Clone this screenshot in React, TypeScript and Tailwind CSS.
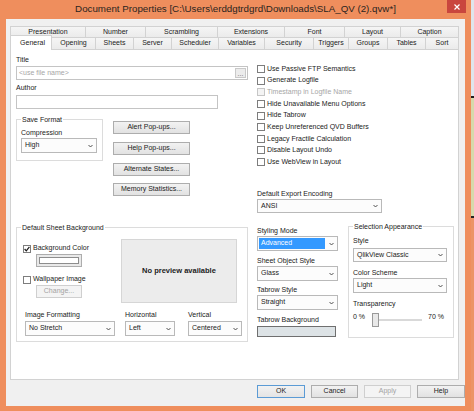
import React from 'react';

function Chevron() {
  return (
    <svg width="5" height="4" viewBox="0 0 5 4" className="shrink-0">
      <polyline points="0.5,1 2.5,3 4.5,1" fill="none" stroke="#404040" strokeWidth="0.9" />
    </svg>
  );
}

function Label({ children, className = '' }: { children: React.ReactNode; className?: string }) {
  return <div className={`h-[9px] leading-[9px] whitespace-nowrap ${className}`}>{children}</div>;
}

function Select({ value, className = '', selected = false }: { value: string; className?: string; selected?: boolean }) {
  return (
    <div className={`flex items-center border border-[#b9b9b9] bg-[#fcfcfc] ${className}`}>
      <span
        className={`flex-1 self-stretch flex items-center ${selected ? 'm-[1px] pl-[2px] bg-[#3399ff] text-white' : 'pl-[3px]'}`}
      >
        {value}
      </span>
      <span className="w-[11px] flex justify-center pr-[1px]">
        <Chevron />
      </span>
    </div>
  );
}

function Check({ label, checked = false, disabled = false, className = '' }: { label: string; checked?: boolean; disabled?: boolean; className?: string }) {
  return (
    <div className={`flex items-center whitespace-nowrap ${className}`}>
      <span
        className={`w-[8px] h-[8px] shrink-0 border flex items-center justify-center ${
          disabled ? 'border-[#c6c6c6] bg-[#f4f4f4]' : 'border-[#7d7d7d] bg-white'
        }`}
      >
        {checked && (
          <svg width="6" height="6" viewBox="0 0 6 6">
            <polyline points="0.6,3 2.3,4.8 5.4,0.8" fill="none" stroke="#1a1a1a" strokeWidth="1.2" />
          </svg>
        )}
      </span>
      <span className={`ml-[2px] ${disabled ? 'text-[#a6a6a6]' : ''}`}>{label}</span>
    </div>
  );
}

function Btn({ children, className = '', disabled = false, isDefault = false }: { children: React.ReactNode; className?: string; disabled?: boolean; isDefault?: boolean }) {
  return (
    <div
      className={`flex items-center justify-center border whitespace-nowrap ${
        disabled
          ? 'border-[#cfcfcf] bg-[#f4f4f4] text-[#a3a3a3]'
          : isDefault
          ? 'border-[#5b9bd5] bg-linear-to-b from-[#f2f2f2] to-[#e4e4e4]'
          : 'border-[#adadad] bg-linear-to-b from-[#f2f2f2] to-[#e2e2e2]'
      } ${className}`}
    >
      {children}
    </div>
  );
}

function Group({ title, className = '', children }: { title: string; className?: string; children?: React.ReactNode }) {
  return (
    <div className={`border border-[#dcdcdc] ${className}`}>
      <div className="-mt-[5px] ml-[4px] px-[1px] w-fit h-[9px] leading-[9px] bg-white whitespace-nowrap">{title}</div>
      {children}
    </div>
  );
}

const backTabs: [string, string][] = [
  ['Presentation', 'w-[75px]'],
  ['Number', 'w-[60px]'],
  ['Scrambling', 'w-[72px]'],
  ['Extensions', 'w-[67px]'],
  ['Font', 'w-[60px]'],
  ['Layout', 'w-[56px]'],
  ['Caption', 'w-[59px]'],
];

const frontTabs: [string, string][] = [
  ['Opening', 'w-[43px]'],
  ['Sheets', 'w-[38px]'],
  ['Server', 'w-[38px]'],
  ['Scheduler', 'w-[47px]'],
  ['Variables', 'w-[46px]'],
  ['Security', 'w-[49px]'],
  ['Triggers', 'w-[35px]'],
  ['Groups', 'w-[39px]'],
  ['Tables', 'w-[38px]'],
  ['Sort', 'w-[34px]'],
];

const options = [
  'Use Passive FTP Semantics',
  'Generate Logfile',
  'Timestamp in Logfile Name',
  'Hide Unavailable Menu Options',
  'Hide Tabrow',
  'Keep Unreferenced QVD Buffers',
  'Legacy Fractile Calculation',
  'Disable Layout Undo',
  'Use WebView in Layout',
];

export default function App() {
  return (
    <div className="w-[474px] h-[411px] flex overflow-hidden bg-[#ef8e5d] text-[7px] text-[#222] font-['Liberation_Sans',Arial,sans-serif]">
      {/* Dialog window */}
      <div className="w-[471px] flex flex-col">
        <div className="relative h-[19px] flex items-center justify-center pb-[1px]">
          <span className="text-[9.75px] text-[#2a2420] whitespace-nowrap">
            Document Properties [C:\Users\erddgtrdgrd\Downloads\SLA_QV (2).qvw*]
          </span>
          <div className="absolute right-[5px] top-0 w-[19px] h-[13px] bg-[#c9463e] flex items-center justify-center">
            <svg width="6" height="6" viewBox="0 0 6 6">
              <path d="M0.5 0.5 L5.5 5.5 M5.5 0.5 L0.5 5.5" stroke="#fff" strokeWidth="1.2" />
            </svg>
          </div>
        </div>

        <div className="flex-1 flex px-[6px] pb-[5px]">
          <div className="flex-1 bg-[#f0f0f0] flex flex-col pt-[7px] pl-[4px]">
            {/* tab rows */}
            <div className="flex h-[11px] w-[449px]">
              {backTabs.map(([t, w], i) => (
                <div
                  key={t}
                  className={`${w} flex items-center justify-center border-t border-l border-[#d2d2d2] bg-linear-to-b from-[#f5f5f5] to-[#ebebeb] ${
                    i === backTabs.length - 1 ? 'border-r' : ''
                  }`}
                >
                  {t}
                </div>
              ))}
            </div>
            <div className="flex items-end h-[12px] w-[449px]">
              <div className="relative z-10 w-[42px] h-[15px] -mb-[1px] flex items-center justify-center pl-[3px] bg-white border-t border-l border-r border-[#d2d2d2]">
                General
              </div>
              {frontTabs.map(([t, w], i) => (
                <div
                  key={t}
                  className={`${w} h-[12px] flex items-center justify-center border-t border-[#d2d2d2] bg-linear-to-b from-[#f5f5f5] to-[#ebebeb] ${
                    i === 0 ? '' : 'border-l'
                  } ${i === frontTabs.length - 1 ? 'border-r' : ''}`}
                >
                  {t}
                </div>
              ))}
            </div>

            {/* panel */}
            <div className="w-[449px] h-[331px] bg-white border border-[#d2d2d2] pt-[5px] pl-[5px] flex flex-col">
              <div className="flex">
                {/* left column */}
                <div className="w-[232px] flex flex-col">
                  <Label>Title</Label>
                  <div className="mt-[2px] h-[14px] border border-[#c4c4c4] flex items-center">
                    <span className="flex-1 pl-[2px] text-[#a6a6a6]">&lt;use file name&gt;</span>
                    <span className="w-[11px] h-[10px] mr-[1px] border border-[#c9c9c9] bg-[#ececec] flex items-end justify-center leading-[7px] text-[#666]">
                      ...
                    </span>
                  </div>
                  <Label className="mt-[3px]">Author</Label>
                  <div className="mt-[3px] w-[202px] h-[14px] border border-[#c4c4c4]" />
                  <div className="flex items-start mt-[10px]">
                    <Group title="Save Format" className="w-[87px] h-[42px] flex flex-col">
                      <Label className="mt-[4px] ml-[4px]">Compression</Label>
                      <Select value="High" className="mt-[1px] ml-[4px] w-[76px] h-[15px]" />
                    </Group>
                    <div className="ml-[10px] w-[77px] flex flex-col">
                      <Btn className="mt-[2px] h-[13px]">Alert Pop-ups...</Btn>
                      <Btn className="mt-[8px] h-[13px]">Help Pop-ups...</Btn>
                      <Btn className="mt-[8px] h-[13px]">Alternate States...</Btn>
                      <Btn className="mt-[7px] h-[13px]">Memory Statistics...</Btn>
                    </div>
                  </div>
                </div>

                {/* right column */}
                <div className="ml-[9px] flex flex-col pt-[8.2px]">
                  {options.map((o) => (
                    <Check key={o} label={o} disabled={o === 'Timestamp in Logfile Name'} className="h-[11.625px]" />
                  ))}
                  <Label className="mt-[20.7px]">Default Export Encoding</Label>
                  <Select value="ANSI" className="mt-[1.5px] w-[125px] h-[14px]" />
                </div>
              </div>

              <div className="flex items-start">
                <Group title="Default Sheet Background" className="mt-[14px] w-[232px] h-[115px] flex flex-col">
                  <div className="mt-[7px] flex">
                    <div className="ml-[6px] pt-[5px] flex flex-col">
                      <Check label="Background Color" checked className="h-[9px]" />
                      <div className="ml-[13px] mt-[1px] w-[46px] h-[13px] border border-[#adadad] bg-[#e9e9e9] p-[2px]">
                        <div className="w-full h-full bg-white border border-[#8d8d8d]" />
                      </div>
                      <Check label="Wallpaper Image" className="mt-[8px] h-[9px]" />
                      <Btn disabled className="ml-[13px] mt-[1px] w-[46px] h-[13px]">
                        Change...
                      </Btn>
                    </div>
                    <div className="ml-auto mr-[10px] w-[116px] h-[64px] bg-[#ececec] border border-[#d6d6d6] flex items-center justify-center font-bold text-[7.5px]">
                      No preview available
                    </div>
                  </div>
                  <div className="mt-[7px] flex">
                    <div className="ml-[8px] w-[90px] flex flex-col">
                      <Label>Image Formatting</Label>
                      <Select value="No Stretch" className="mt-[2px] h-[15px]" />
                    </div>
                    <div className="ml-[10px] w-[50px] flex flex-col">
                      <Label>Horizontal</Label>
                      <Select value="Left" className="mt-[2px] h-[15px]" />
                    </div>
                    <div className="ml-[13px] w-[54px] flex flex-col">
                      <Label>Vertical</Label>
                      <Select value="Centered" className="mt-[2px] h-[15px]" />
                    </div>
                  </div>
                </Group>

                <div className="ml-[9px] w-[81px] flex flex-col">
                  <Label className="mt-[12.5px]">Styling Mode</Label>
                  <Select value="Advanced" selected className="mt-[1.5px] h-[15px]" />
                  <Label className="mt-[4.5px]">Sheet Object Style</Label>
                  <Select value="Glass" className="mt-[1.5px] h-[15px]" />
                  <Label className="mt-[3.5px]">Tabrow Style</Label>
                  <Select value="Straight" className="mt-[1.5px] h-[15px]" />
                  <Label className="mt-[4.5px]">Tabrow Background</Label>
                  <div className="mt-[2.5px] w-[79px] h-[11px] border border-[#6f6f6f] bg-[#dde3e6]" />
                </div>

                <Group title="Selection Appearance" className="ml-[10px] mt-[13px] w-[106px] h-[112px] flex flex-col">
                  <div className="pl-[4px] flex flex-col">
                    <Label className="mt-[4.5px]">Style</Label>
                    <Select value="QlikView Classic" className="mt-[3.5px] w-[94px] h-[14px]" />
                    <Label className="mt-[5.5px]">Color Scheme</Label>
                    <Select value="Light" className="mt-[1.5px] w-[94px] h-[15px]" />
                    <Label className="mt-[5.5px]">Transparency</Label>
                    <div className="mt-[5.5px] h-[14px] flex items-center">
                      <span className="w-[19px] -mt-[5px]">0 %</span>
                      <span className="w-[7px] h-[14px] border border-[#9a9a9a] bg-[#e9e9e9]" />
                      <span className="w-[43px] h-[2px] bg-[#d9d9d9]" />
                      <span className="ml-[6px] -mt-[5px]">70 %</span>
                    </div>
                  </div>
                </Group>
              </div>
            </div>

            {/* dialog buttons */}
            <div className="mt-[5px] w-[455px] flex justify-end gap-[6px]">
              <Btn isDefault className="w-[48px] h-[13px]">OK</Btn>
              <Btn className="w-[47px] h-[13px]">Cancel</Btn>
              <Btn disabled className="w-[47px] h-[13px]">Apply</Btn>
              <Btn className="w-[48px] h-[13px]">Help</Btn>
            </div>
          </div>
        </div>
      </div>

      {/* sliver of the application behind */}
      <div className="w-[3px] flex flex-col">
        <div className="h-[96px] bg-[#dfe6ec]" />
        <div className="h-[2px] bg-[#1c1c1c]" />
        <div className="h-[118px] bg-[#d6d9ab]" />
        <div className="h-[2px] bg-[#222]" />
        <div className="flex-1 bg-[#ec9466]" />
      </div>
    </div>
  );
}
